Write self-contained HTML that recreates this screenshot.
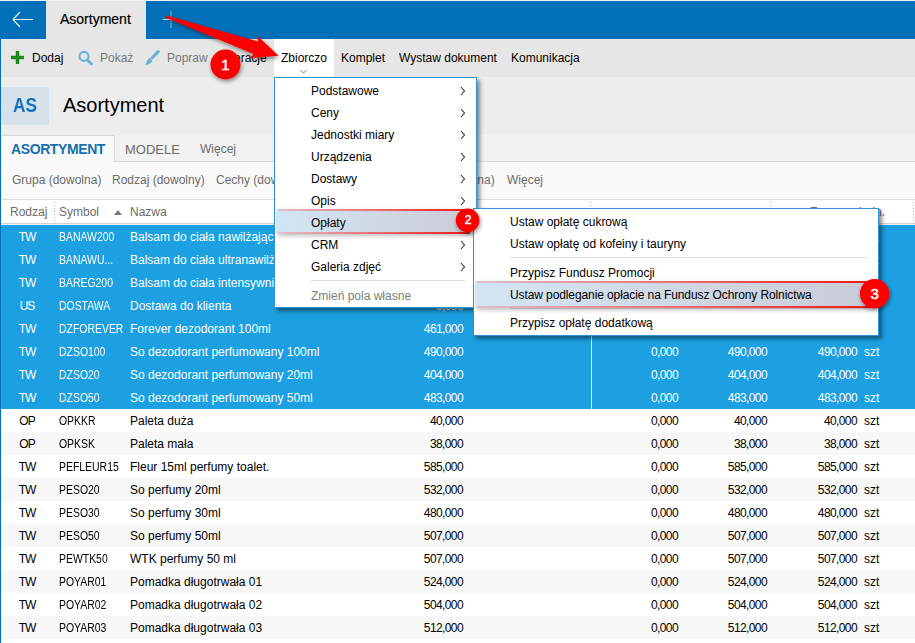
<!DOCTYPE html>
<html><head><meta charset="utf-8">
<style>
*{margin:0;padding:0;box-sizing:border-box}
html,body{width:915px;height:643px;overflow:hidden;background:#fff}
body{position:relative;font-family:"Liberation Sans",sans-serif;font-size:12px;color:#000}
.a{position:absolute;white-space:nowrap}
.bl{position:absolute}
.t{position:absolute;white-space:nowrap;line-height:23px}
#grid .r{position:absolute;left:1px;width:914px;height:23px}
#grid .r span{position:absolute;white-space:nowrap;line-height:23px;top:1px}
.sym{transform:scaleX(0.87);transform-origin:0 0}
.dot{position:absolute;width:1px;background:repeating-linear-gradient(180deg,#b8b8b8 0,#b8b8b8 1px,transparent 1px,transparent 3px)}
.sel span{color:#fff}
.num{letter-spacing:-0.6px;text-align:right}
.mi{position:absolute;left:0;width:100%;height:22px;line-height:22px}
.mi span{position:absolute;white-space:nowrap}
.chev{position:absolute;left:186px;top:7px;width:5px;height:8px}
</style></head><body>

<!-- top header -->
<div class="bl" style="left:0;top:0;width:915px;height:1px;background:#f2f2f2"></div>
<div class="bl" style="left:0;top:1px;width:915px;height:38px;background:#0070b9"></div>
<div class="bl" style="left:46px;top:1px;width:100px;height:38px;background:#e6e6e6"></div>
<div class="a" style="left:60px;top:0px;line-height:38px;font-size:14px;color:#000;font-weight:normal;-webkit-text-stroke:0.2px #000">Asortyment</div>
<!-- back arrow -->
<svg class="bl" style="left:0;top:1px" width="46" height="38"><path d="M13 18.5 H33 M13 18.5 L20 11 M13 18.5 L20 26" stroke="#e6eef6" stroke-width="1.2" fill="none"/></svg>
<!-- plus -->
<svg class="bl" style="left:160px;top:1px" width="20" height="38"><path d="M11 10 V27" stroke="#8dbbe2" stroke-width="1" fill="none"/><path d="M3 18.5 H18" stroke="#d8e8f5" stroke-width="1" fill="none"/></svg>

<!-- toolbar -->
<div class="bl" style="left:0;top:39px;width:915px;height:38px;background:#e6e6e6"></div>
<div class="bl" style="left:274px;top:39px;width:60px;height:38px;background:#fff"></div>
<svg class="bl" style="left:11px;top:51px" width="13" height="13"><path d="M6.5 0 V13 M0 6.5 H13" stroke="#1a8a1a" stroke-width="3.4" fill="none"/></svg>
<div class="a" style="left:32px;top:39px;line-height:38px;color:#000">Dodaj</div>
<svg class="bl" style="left:70px;top:44px" width="100" height="28"><circle cx="14" cy="12.4" r="4.5" stroke="#67b1d8" stroke-width="2.1" fill="none"/><path d="M17.3 15.8 L21.5 20" stroke="#67b1d8" stroke-width="2.6" stroke-linecap="round"/><path d="M87.2 6.2 C88.6 5.2 90.4 6.8 89.6 8.4 L82.6 15.4 L80.6 13.6 Z" fill="#67b1d8"/><path d="M80.2 13.8 C77.6 14.6 76.4 17.6 75.3 21 C78.8 20.4 81.8 19.2 82.4 16.2 Z" fill="#67b1d8"/></svg>
<div class="a" style="left:100px;top:39px;line-height:38px;color:#767676">Pokaż</div>

<div class="a" style="left:167px;top:39px;line-height:38px;color:#767676">Popraw</div>
<div class="a" style="left:218px;top:39px;line-height:38px;color:#000">Operacje</div>
<div class="a" style="left:281px;top:39px;line-height:38px;color:#000">Zbiorczo</div>
<svg class="bl" style="left:299px;top:69px" width="10" height="6"><path d="M1.5 1 L4.5 4 L7.5 1" stroke="#7a7a7a" stroke-width="1" fill="none"/></svg>
<div class="a" style="left:341px;top:39px;line-height:38px;color:#000">Komplet</div>
<div class="a" style="left:399px;top:39px;line-height:38px;color:#000">Wystaw dokument</div>
<div class="a" style="left:511px;top:39px;line-height:38px;color:#000">Komunikacja</div>

<!-- page header -->
<div class="bl" style="left:1px;top:77px;width:914px;height:58px;background:#ededed"></div>
<div class="bl" style="left:1px;top:87px;width:48px;height:38px;background:#d6e1ea"></div>
<div class="a" style="left:13px;top:86px;line-height:38px;font-size:20px;font-weight:bold;color:#1570bd;transform:scaleX(0.86);transform-origin:0 0">AS</div>
<div class="a" style="left:63px;top:86px;line-height:38px;font-size:20px;color:#000">Asortyment</div>

<!-- tab strip -->
<div class="bl" style="left:1px;top:135px;width:914px;height:27px;background:#f2f2f2;border-bottom:1px solid #d9d9d9"></div>
<div class="bl" style="left:1px;top:135px;width:114px;height:28px;background:#f9f9f9;border-top:1px solid #d9d9d9;border-right:1px solid #d9d9d9"></div>
<div class="a" style="left:11px;top:137px;line-height:25px;font-size:14px;font-weight:bold;color:#1570ac;letter-spacing:-0.4px">ASORTYMENT</div>
<div class="a" style="left:125px;top:137px;line-height:25px;font-size:13px;color:#6b6b6b">MODELE</div>
<div class="a" style="left:200px;top:137px;line-height:25px;font-size:12px;color:#6b6b6b">Więcej</div>

<!-- filter bar -->
<div class="bl" style="left:1px;top:162px;width:914px;height:38px;background:#f9f9f9;border-bottom:1px solid #dcdcdc"></div>
<div class="a" style="left:12px;top:162px;line-height:37px;color:#6b6b6b">Grupa (dowolna)</div>
<div class="a" style="left:112px;top:162px;line-height:37px;color:#6b6b6b">Rodzaj (dowolny)</div>
<div class="a" style="left:216px;top:162px;line-height:37px;color:#6b6b6b">Cechy (dowolne)</div>
<div class="a" style="left:442px;top:162px;line-height:37px;color:#6b6b6b">(dowolna)</div>
<div class="a" style="left:507px;top:162px;line-height:37px;color:#6b6b6b">Więcej</div>

<!-- column header -->
<div class="bl" style="left:1px;top:200px;width:914px;height:24px;background:#fff;border-bottom:1px solid #d2d2d2"></div><div class="bl" style="left:1px;top:224px;width:914px;height:1px;background:#f3f3f3"></div>
<div class="a" style="left:10px;top:201px;line-height:23px;color:#6b6b6b">Rodzaj</div>
<div class="dot" style="left:54px;top:202px;height:19px"></div>
<div class="a" style="left:59px;top:201px;line-height:23px;color:#6b6b6b">Symbol</div>
<svg class="bl" style="left:114px;top:210px" width="8" height="5"><path d="M0 5 L4 0 L8 5Z" fill="#7a7a7a"/></svg>
<div class="a" style="left:130px;top:201px;line-height:23px;color:#6b6b6b">Nazwa</div>
<div class="a" style="left:510px;top:202px;line-height:23px;color:#6b6b6b">Cena zakupu</div>
<div class="dot" style="left:590px;top:202px;height:19px"></div>
<div class="a" style="left:600px;top:202px;line-height:23px;color:#6b6b6b">Zarezerwowano</div>
<div class="a" style="left:694px;top:202px;line-height:23px;color:#6b6b6b">Na stanie</div>
<div class="dot" style="left:770px;top:202px;height:19px"></div>
<div class="a" style="right:30px;top:201px;line-height:23px;color:#6b6b6b">Zapas w jedn.</div>
<div class="dot" style="left:913px;top:202px;height:19px"></div>

<!-- grid -->
<div id="grid">
<div class="r sel" style="top:225px;background:#1ca0e1"><span style="left:5px;width:42px;text-align:center;letter-spacing:-1px">TW</span><span class="sym" style="left:58px">BANAW200</span><span style="left:129px">Balsam do ciała nawilżający do skóry suchej</span><span class="num" style="right:452px">0,000</span><span class="num" style="right:237px">0,000</span><span class="num" style="right:148px">0,000</span><span class="num" style="right:58px">0,000</span><span style="left:863px">szt</span></div>
<div class="r sel" style="top:248px;background:#1ca0e1"><span style="left:5px;width:42px;text-align:center;letter-spacing:-1px">TW</span><span class="sym" style="left:58px">BANAWU...</span><span style="left:129px">Balsam do ciała ultranawilżający</span><span class="num" style="right:452px">0,000</span><span class="num" style="right:237px">0,000</span><span class="num" style="right:148px">0,000</span><span class="num" style="right:58px">0,000</span><span style="left:863px">szt</span></div>
<div class="r sel" style="top:271px;background:#1ca0e1"><span style="left:5px;width:42px;text-align:center;letter-spacing:-1px">TW</span><span class="sym" style="left:58px">BAREG200</span><span style="left:129px">Balsam do ciała intensywnie regenerujący</span><span class="num" style="right:452px">0,000</span><span class="num" style="right:237px">0,000</span><span class="num" style="right:148px">0,000</span><span class="num" style="right:58px">0,000</span><span style="left:863px">szt</span></div>
<div class="r sel" style="top:294px;background:#1ca0e1"><span style="left:5px;width:42px;text-align:center;letter-spacing:-1px">US</span><span class="sym" style="left:58px">DOSTAWA</span><span style="left:129px">Dostawa do klienta</span><span class="num" style="right:452px">0,000</span><span class="num" style="right:237px">0,000</span><span class="num" style="right:148px">0,000</span><span class="num" style="right:58px">0,000</span><span style="left:863px">szt</span></div>
<div class="r sel" style="top:317px;background:#1ca0e1"><span style="left:5px;width:42px;text-align:center;letter-spacing:-1px">TW</span><span class="sym" style="left:58px">DZFOREVER</span><span style="left:129px">Forever dezodorant 100ml</span><span class="num" style="right:452px">461,000</span><span class="num" style="right:237px">0,000</span><span class="num" style="right:148px">461,000</span><span class="num" style="right:58px">461,000</span><span style="left:863px">szt</span></div>
<div class="r sel" style="top:340px;background:#1ca0e1"><span style="left:5px;width:42px;text-align:center;letter-spacing:-1px">TW</span><span class="sym" style="left:58px">DZSO100</span><span style="left:129px">So dezodorant perfumowany 100ml</span><span class="num" style="right:452px">490,000</span><span class="num" style="right:237px">0,000</span><span class="num" style="right:148px">490,000</span><span class="num" style="right:58px">490,000</span><span style="left:863px">szt</span></div>
<div class="r sel" style="top:363px;background:#1ca0e1"><span style="left:5px;width:42px;text-align:center;letter-spacing:-1px">TW</span><span class="sym" style="left:58px">DZSO20</span><span style="left:129px">So dezodorant perfumowany 20ml</span><span class="num" style="right:452px">404,000</span><span class="num" style="right:237px">0,000</span><span class="num" style="right:148px">404,000</span><span class="num" style="right:58px">404,000</span><span style="left:863px">szt</span></div>
<div class="r sel" style="top:386px;background:#1ca0e1"><span style="left:5px;width:42px;text-align:center;letter-spacing:-1px">TW</span><span class="sym" style="left:58px">DZSO50</span><span style="left:129px">So dezodorant perfumowany 50ml</span><span class="num" style="right:452px">483,000</span><span class="num" style="right:237px">0,000</span><span class="num" style="right:148px">483,000</span><span class="num" style="right:58px">483,000</span><span style="left:863px">szt</span></div>
<div class="r" style="top:409px;background:#fff"><span style="left:5px;width:42px;text-align:center;letter-spacing:-1px">OP</span><span class="sym" style="left:58px">OPKKR</span><span style="left:129px">Paleta duża</span><span class="num" style="right:452px">40,000</span><span class="num" style="right:237px">0,000</span><span class="num" style="right:148px">40,000</span><span class="num" style="right:58px">40,000</span><span style="left:863px">szt</span></div>
<div class="r" style="top:432px;background:#f7f7f7"><span style="left:5px;width:42px;text-align:center;letter-spacing:-1px">OP</span><span class="sym" style="left:58px">OPKSK</span><span style="left:129px">Paleta mała</span><span class="num" style="right:452px">38,000</span><span class="num" style="right:237px">0,000</span><span class="num" style="right:148px">38,000</span><span class="num" style="right:58px">38,000</span><span style="left:863px">szt</span></div>
<div class="r" style="top:455px;background:#fff"><span style="left:5px;width:42px;text-align:center;letter-spacing:-1px">TW</span><span class="sym" style="left:58px">PEFLEUR15</span><span style="left:129px">Fleur 15ml perfumy toalet.</span><span class="num" style="right:452px">585,000</span><span class="num" style="right:237px">0,000</span><span class="num" style="right:148px">585,000</span><span class="num" style="right:58px">585,000</span><span style="left:863px">szt</span></div>
<div class="r" style="top:478px;background:#f7f7f7"><span style="left:5px;width:42px;text-align:center;letter-spacing:-1px">TW</span><span class="sym" style="left:58px">PESO20</span><span style="left:129px">So perfumy 20ml</span><span class="num" style="right:452px">532,000</span><span class="num" style="right:237px">0,000</span><span class="num" style="right:148px">532,000</span><span class="num" style="right:58px">532,000</span><span style="left:863px">szt</span></div>
<div class="r" style="top:501px;background:#fff"><span style="left:5px;width:42px;text-align:center;letter-spacing:-1px">TW</span><span class="sym" style="left:58px">PESO30</span><span style="left:129px">So perfumy 30ml</span><span class="num" style="right:452px">480,000</span><span class="num" style="right:237px">0,000</span><span class="num" style="right:148px">480,000</span><span class="num" style="right:58px">480,000</span><span style="left:863px">szt</span></div>
<div class="r" style="top:524px;background:#f7f7f7"><span style="left:5px;width:42px;text-align:center;letter-spacing:-1px">TW</span><span class="sym" style="left:58px">PESO50</span><span style="left:129px">So perfumy 50ml</span><span class="num" style="right:452px">507,000</span><span class="num" style="right:237px">0,000</span><span class="num" style="right:148px">507,000</span><span class="num" style="right:58px">507,000</span><span style="left:863px">szt</span></div>
<div class="r" style="top:547px;background:#fff"><span style="left:5px;width:42px;text-align:center;letter-spacing:-1px">TW</span><span class="sym" style="left:58px">PEWTK50</span><span style="left:129px">WTK perfumy 50 ml</span><span class="num" style="right:452px">507,000</span><span class="num" style="right:237px">0,000</span><span class="num" style="right:148px">507,000</span><span class="num" style="right:58px">507,000</span><span style="left:863px">szt</span></div>
<div class="r" style="top:570px;background:#f7f7f7"><span style="left:5px;width:42px;text-align:center;letter-spacing:-1px">TW</span><span class="sym" style="left:58px">POYAR01</span><span style="left:129px">Pomadka długotrwała 01</span><span class="num" style="right:452px">524,000</span><span class="num" style="right:237px">0,000</span><span class="num" style="right:148px">524,000</span><span class="num" style="right:58px">524,000</span><span style="left:863px">szt</span></div>
<div class="r" style="top:593px;background:#fff"><span style="left:5px;width:42px;text-align:center;letter-spacing:-1px">TW</span><span class="sym" style="left:58px">POYAR02</span><span style="left:129px">Pomadka długotrwała 02</span><span class="num" style="right:452px">504,000</span><span class="num" style="right:237px">0,000</span><span class="num" style="right:148px">504,000</span><span class="num" style="right:58px">504,000</span><span style="left:863px">szt</span></div>
<div class="r" style="top:616px;background:#f7f7f7"><span style="left:5px;width:42px;text-align:center;letter-spacing:-1px">TW</span><span class="sym" style="left:58px">POYAR03</span><span style="left:129px">Pomadka długotrwała 03</span><span class="num" style="right:452px">512,000</span><span class="num" style="right:237px">0,000</span><span class="num" style="right:148px">512,000</span><span class="num" style="right:58px">512,000</span><span style="left:863px">szt</span></div>
<div class="r" style="top:639px;background:#fff"><span style="left:5px;width:42px;text-align:center;letter-spacing:-1px">TW</span><span class="sym" style="left:58px">POYAR04</span><span style="left:129px">Pomadka długotrwała 04</span><span class="num" style="right:452px">512,000</span><span class="num" style="right:237px">0,000</span><span class="num" style="right:148px">512,000</span><span class="num" style="right:58px">512,000</span><span style="left:863px">szt</span></div>
<div class="bl" style="left:591px;top:225px;width:1px;height:184px;background:#e8f4fb"></div>
</div>
<!-- left border -->
<div class="bl" style="left:0;top:39px;width:1px;height:604px;background:#0070b9"></div>


<!-- menu 1 -->
<div class="bl" style="left:274px;top:77px;width:203px;height:231px;background:#fff;border:1px solid #2f93da;box-shadow:3px 3px 4px rgba(0,0,0,0.45)"></div>
<div class="a" style="left:311px;top:80px;line-height:22px;color:#000">Podstawowe</div>
<div class="a" style="left:311px;top:102px;line-height:22px;color:#000">Ceny</div>
<div class="a" style="left:311px;top:124px;line-height:22px;color:#000">Jednostki miary</div>
<div class="a" style="left:311px;top:146px;line-height:22px;color:#000">Urządzenia</div>
<div class="a" style="left:311px;top:168px;line-height:22px;color:#000">Dostawy</div>
<div class="a" style="left:311px;top:190px;line-height:22px;color:#000">Opis</div>
<!-- highlight opłaty -->
<div class="bl" style="left:276px;top:209px;width:196px;height:25px;border-radius:0 4px 4px 0;background:linear-gradient(90deg,#d2e5f5,#cfd6e2 60%,#c9ccd8);box-shadow:2px 2px 4px rgba(0,0,0,0.25)"></div>
<div class="bl" style="left:278px;top:209px;width:192px;height:2px;background:linear-gradient(90deg,rgba(255,80,80,0.25),rgba(255,40,40,0.6) 50%,#f01818)"></div>
<div class="bl" style="left:278px;top:232px;width:192px;height:2px;background:linear-gradient(90deg,rgba(255,80,80,0.25),rgba(255,40,40,0.6) 50%,#f01818)"></div>
<div class="a" style="left:311px;top:212px;line-height:22px;color:#000">Opłaty</div>
<div class="a" style="left:311px;top:234px;line-height:22px;color:#000">CRM</div>
<div class="a" style="left:311px;top:256px;line-height:22px;color:#000">Galeria zdjęć</div>
<div class="bl" style="left:311px;top:280px;width:154px;height:1px;background:#dedede"></div>
<div class="a" style="left:311px;top:285px;line-height:22px;color:#6f8677">Zmień pola własne</div>
<svg class="bl" style="left:458px;top:80px" width="10" height="198">
<g stroke="#333" stroke-width="1.1" fill="none">
<path d="M3 7 L6.5 11 L3 15"/><path d="M3 29 L6.5 33 L3 37"/><path d="M3 51 L6.5 55 L3 59"/><path d="M3 73 L6.5 77 L3 81"/><path d="M3 95 L6.5 99 L3 103"/><path d="M3 117 L6.5 121 L3 125"/><path d="M3 161 L6.5 165 L3 169"/><path d="M3 183 L6.5 187 L3 191"/>
</g></svg>

<!-- submenu -->
<div class="bl" style="left:473px;top:208px;width:406px;height:128px;background:#fff;border:1px solid #2f93da;box-shadow:3px 3px 4px rgba(0,0,0,0.45)"></div>
<div class="a" style="left:510px;top:211px;line-height:22px;color:#000">Ustaw opłatę cukrową</div>
<div class="a" style="left:510px;top:233px;line-height:22px;color:#000">Ustaw opłatę od kofeiny i tauryny</div>
<div class="bl" style="left:510px;top:257px;width:357px;height:1px;background:#dedede"></div>
<div class="a" style="left:510px;top:262px;line-height:22px;color:#000">Przypisz Fundusz Promocji</div>
<div class="bl" style="left:510px;top:308px;width:357px;height:1px;background:#dedede"></div>
<div class="bl" style="left:475px;top:281px;width:398px;height:27px;border-radius:0 4px 4px 0;background:linear-gradient(90deg,#d2e5f5,#cfd6e2 60%,#c9ccd8);box-shadow:2px 2px 4px rgba(0,0,0,0.25)"></div>
<div class="bl" style="left:477px;top:281px;width:394px;height:2px;background:linear-gradient(90deg,rgba(255,80,80,0.25),rgba(255,40,40,0.6) 50%,#f01818)"></div>
<div class="bl" style="left:477px;top:306px;width:394px;height:2px;background:linear-gradient(90deg,rgba(255,80,80,0.25),rgba(255,40,40,0.6) 50%,#f01818)"></div>
<div class="a" style="left:510px;top:284px;line-height:22px;color:#000;letter-spacing:-0.1px">Ustaw podleganie opłacie na Fundusz Ochrony Rolnictwa</div>
<div class="a" style="left:510px;top:312px;line-height:22px;color:#000">Przypisz opłatę dodatkową</div>

<!-- annotations -->
<svg class="bl" style="left:0;top:0" width="915" height="643">
<defs><filter id="sh" x="-20%" y="-20%" width="140%" height="140%"><feGaussianBlur in="SourceAlpha" stdDeviation="2"/><feOffset dx="1" dy="2"/><feComponentTransfer><feFuncA type="linear" slope="0.45"/></feComponentTransfer><feMerge><feMergeNode/><feMergeNode in="SourceGraphic"/></feMerge></filter></defs>
<path filter="url(#sh)" fill="#fa0000" d="M167 15.6 L258 41.5 L257.6 36 L278.5 55.7 L249.9 58.1 L253.6 54.1 L167.2 18.2 C165.6 17.6 165.6 15.4 167 15.6 Z"/>
<circle filter="url(#sh)" cx="225.5" cy="64.5" r="15" fill="#ff0000"/>
<text x="225.5" y="70" text-anchor="middle" font-family="Liberation Sans" font-size="15" fill="#fff" stroke="#fff" stroke-width="0.5">1</text>
<circle filter="url(#sh)" cx="467.6" cy="220.3" r="11.8" fill="#ff0000"/>
<text x="468" y="224" text-anchor="middle" font-family="Liberation Sans" font-size="12" fill="#fff" stroke="#fff" stroke-width="0.5">2</text>
<circle filter="url(#sh)" cx="874.6" cy="293.7" r="14.7" fill="#ff0000"/>
<text x="874.6" y="299" text-anchor="middle" font-family="Liberation Sans" font-size="15" fill="#fff" stroke="#fff" stroke-width="0.5">3</text>
</svg>

</body></html>
